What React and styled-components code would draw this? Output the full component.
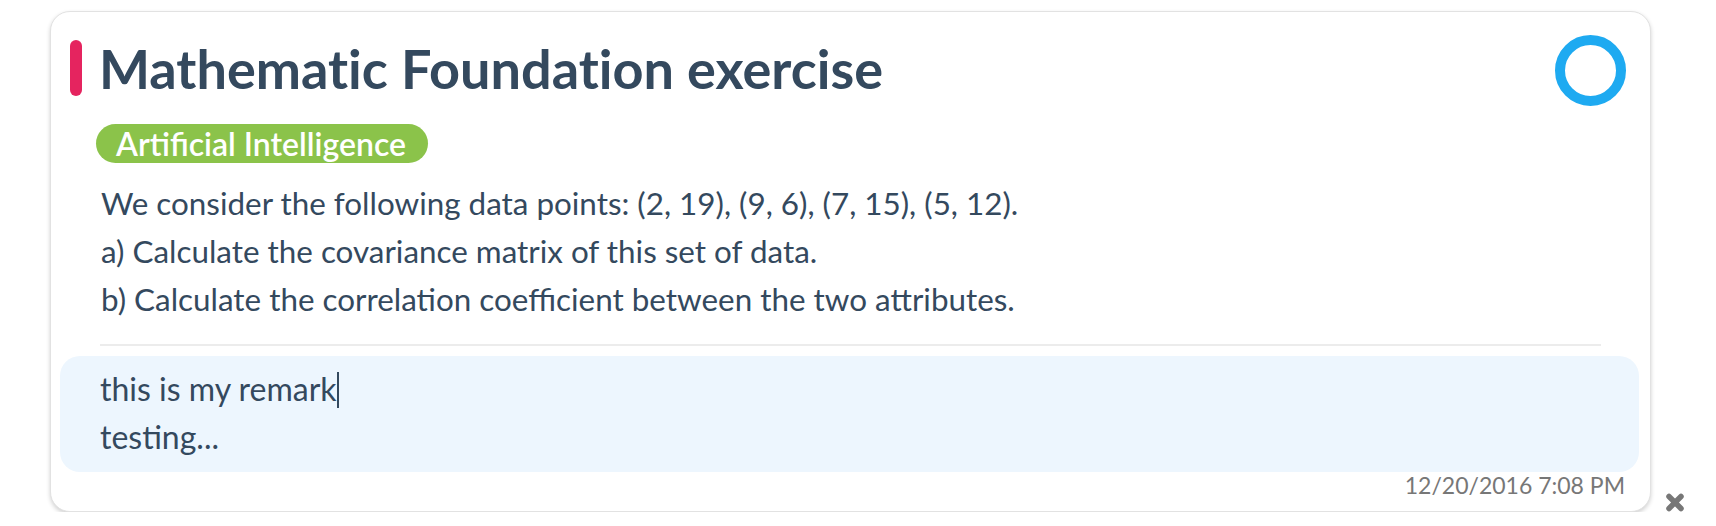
import styled, { createGlobalStyle } from 'styled-components'

const GlobalStyle = createGlobalStyle`
    html, body {
        margin: 0;
        padding: 0;
        background: #ffffff;
    }
    body {
        font-family: Lato, "Open Sans", sans-serif;
        color: #34495e;
    }
`

const App = () => {

    return (
        <>
            <GlobalStyle />
            <Page>
                <Card>
                    <CardHeader>
                        <PriorityBar />
                        <Title>Mathematic Foundation exercise</Title>
                        <DoneToggle aria-label="mark as done" />
                    </CardHeader>
                    <CardBody>
                        <Tag>Artificial Intelligence</Tag>
                        <Description>
                            <p>We consider the following data points: (2, 19), (9, 6), (7, 15), (5, 12).</p>
                            <p>a) Calculate the covariance matrix of this set of data.</p>
                            <p>b) Calculate the correlation coefficient between the two attributes.</p>
                        </Description>
                        <Divider />
                    </CardBody>
                    <Remark>
                        <p>this is my remark<Caret /></p>
                        <p>testing...</p>
                    </Remark>
                    <Footer>12/20/2016 7:08 PM</Footer>
                </Card>
                <CloseButton aria-label="remove">
                    <svg width="20" height="19" viewBox="0 0 20 19">
                        <path
                            d="M4 3.5 L16 15.5 M16 3.5 L4 15.5"
                            stroke="#777"
                            strokeWidth="5.5"
                            strokeLinecap="round"
                        />
                    </svg>
                </CloseButton>
            </Page>
        </>
    )
}

const Page = styled.div `
    display: flex;
    align-items: flex-end;
    gap: 14px;
    padding: 11px 0 0 50px;
`

const Card = styled.div `
    width: 1601px;
    height: 501px;
    box-sizing: border-box;
    border: 1px solid #e2e2e2;
    border-radius: 20px;
    background: #ffffff;
    box-shadow: 0 2px 4px rgba(0, 0, 0, 0.18);
    padding: 23px 0 0 0;
    display: flex;
    flex-direction: column;
`

const CardHeader = styled.div `
    display: flex;
    align-items: flex-start;
    padding: 0 24px 0 19px;
    height: 71px;
`

const PriorityBar = styled.div `
    width: 12px;
    height: 56px;
    margin-top: 5px;
    border-radius: 6px;
    background: #e5245f;
    flex-shrink: 0;
`

const Title = styled.h1 `
    margin: 2px 0 0 17px;
    flex: 1;
    font-size: 54px;
    line-height: 1.2;
    font-weight: 700;
    font-variant-ligatures: no-common-ligatures;
    color: #34495e;
`

const DoneToggle = styled.button `
    width: 71px;
    height: 71px;
    box-sizing: border-box;
    border: 10px solid #1eaaf1;
    border-radius: 50%;
    background: transparent;
    padding: 0;
    flex-shrink: 0;
    cursor: pointer;
`

const CardBody = styled.div `
    display: flex;
    flex-direction: column;
    align-items: flex-start;
    padding: 18px 49px 0 45px;
`

const Tag = styled.span `
    display: inline-block;
    height: 39px;
    line-height: 39px;
    padding: 0 22px 0 20px;
    border-radius: 20px;
    background: #8bc34a;
    color: #ffffff;
    font-size: 32px;
    font-weight: 600;
`

const Description = styled.div `
    margin: 16px 0 0 5px;
    font-size: 31.4px;
    line-height: 48px;

    p {
        margin: 0;
    }
`

const Divider = styled.hr `
    align-self: stretch;
    margin: 21px 0 0 4px;
    border: 0;
    height: 2px;
    background: #ececec;
`

const Remark = styled.div `
    margin: 10px 11px 0 9px;
    padding: 9px 40px 11px;
    border-radius: 20px;
    background: #edf6fe;
    font-size: 32px;
    line-height: 48px;

    p {
        margin: 0;
    }
`

const Caret = styled.span `
    display: inline-block;
    width: 0;
    height: 36px;
    vertical-align: -7px;
    border-left: 2px solid #34495e;
`

const Footer = styled.div `
    padding: 0 25px 0 0;
    text-align: right;
    font-size: 23px;
    line-height: 26px;
    color: #777777;
`

const CloseButton = styled.button `
    border: 0;
    background: transparent;
    padding: 0;
    width: 20px;
    height: 19px;
    cursor: pointer;

    svg {
        display: block;
    }
`

export default App
